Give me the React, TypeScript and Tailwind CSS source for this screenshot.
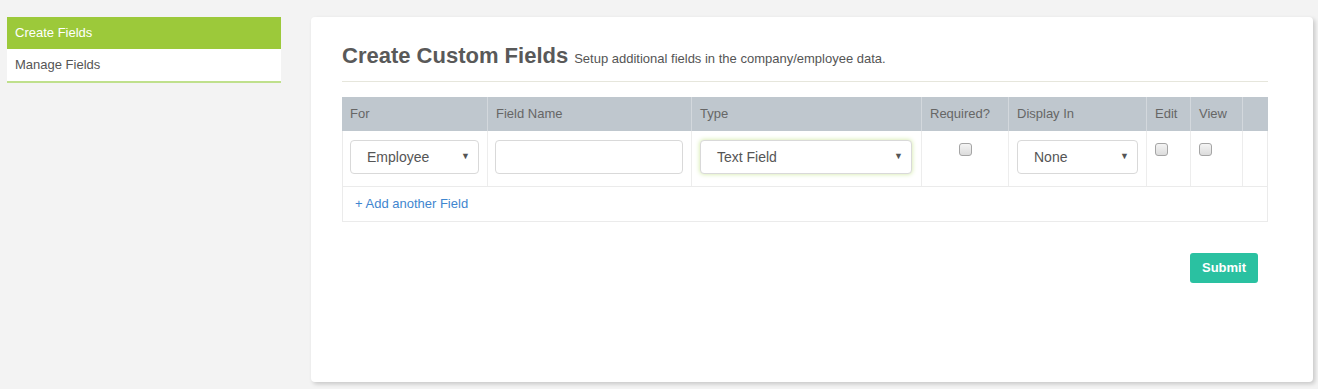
const SelectBox = ({ label, className = "" }: { label: string; className?: string }) => (
  <div
    className={`flex h-[34px] items-center justify-between rounded border border-[#d9d9d9] bg-white pl-[16px] pr-[8px] text-[14px] text-[#555] ${className}`}
  >
    <span>{label}</span>
    <span className="text-[9px] text-[#555]">▼</span>
  </div>
);

const Check = () => (
  <div className="h-[13px] w-[13px] rounded-[3px] border border-[#a5a5a5] bg-gradient-to-b from-[#f4f4f4] to-[#dcdcdc]" />
);

const headers = ["For", "Field Name", "Type", "Required?", "Display In", "Edit", "View", ""];

export default function App() {
  return (
    <div className="min-h-[389px] bg-[#f3f3f3] pl-[7px] pt-[17px] font-['Liberation_Sans',Arial,sans-serif]">
      <div className="flex gap-[30px]">
        {/* sidebar */}
        <div className="w-[274px]">
          <div className="flex h-[32px] items-center bg-[#9cc93a] pl-[8px] text-[13px] text-white">Create Fields</div>
          <div className="flex h-[34px] items-center border-b-2 border-[#bfe08c] bg-white pl-[8px] text-[13px] text-[#555]">
            Manage Fields
          </div>
        </div>

        {/* card */}
        <div className="h-[365px] w-[1002px] rounded-[4px] bg-white pl-[31px] pr-[45px] pt-[22px] shadow-[2px_2px_4px_rgba(0,0,0,0.18)]">
          <div className="flex h-[30px] items-baseline gap-[6px] text-[#595959]">
            <h1 className="text-[22px] font-bold">Create Custom Fields</h1>
            <span className="text-[13px] text-[#555]">Setup additional fields in the company/employee data.</span>
          </div>
          <div className="mt-[12px] border-t border-[#e6e6dc]" />

          <div className="mt-[15px] w-[926px]">
            <div className="grid grid-cols-[146px_204px_230px_87px_138px_44px_52px_25px] bg-[#bfc7ce]">
              {headers.map((h, i) => (
                <div
                  key={i}
                  className="flex h-[34px] items-center border-r border-[#d3d8dd] pl-[8px] text-[13px] text-[#666] last:border-r-0"
                >
                  {h}
                </div>
              ))}
            </div>
            <div className="border-x border-b border-[#ebebeb]">
              <div className="grid h-[56px] grid-cols-[145px_204px_230px_87px_138px_44px_52px_24px] border-b border-[#ebebeb]">
                <div className="border-r border-[#ededed] px-[7px] pt-[9px]">
                  <SelectBox label="Employee" className="w-[129px]" />
                </div>
                <div className="border-r border-[#ededed] px-[7px] pt-[9px]">
                  <div className="h-[34px] w-[188px] rounded border border-[#d9d9d9] bg-white" />
                </div>
                <div className="border-r border-[#ededed] px-[8px] pt-[9px]">
                  <SelectBox
                    label="Text Field"
                    className="w-[212px] border-[#cfe5a4] shadow-[0_0_5px_#cfe8a0]"
                  />
                </div>
                <div className="flex justify-center border-r border-[#ededed] pt-[12px]">
                  <Check />
                </div>
                <div className="border-r border-[#ededed] px-[8px] pt-[9px]">
                  <SelectBox label="None" className="w-[121px]" />
                </div>
                <div className="border-r border-[#ededed] pl-[8px] pt-[12px]">
                  <Check />
                </div>
                <div className="border-r border-[#ededed] pl-[8px] pt-[12px]">
                  <Check />
                </div>
                <div />
              </div>
              <div className="flex h-[34px] items-center pl-[12px] text-[13px] text-[#3f86cf]">+ Add another Field</div>
            </div>
          </div>

          <div className="mt-[31px] flex w-[926px] justify-end pr-[10px]">
            <button className="h-[30px] w-[68px] rounded-[3px] bg-[#2ac1a1] text-[13px] font-bold text-white">
              Submit
            </button>
          </div>
        </div>
      </div>
    </div>
  );
}
